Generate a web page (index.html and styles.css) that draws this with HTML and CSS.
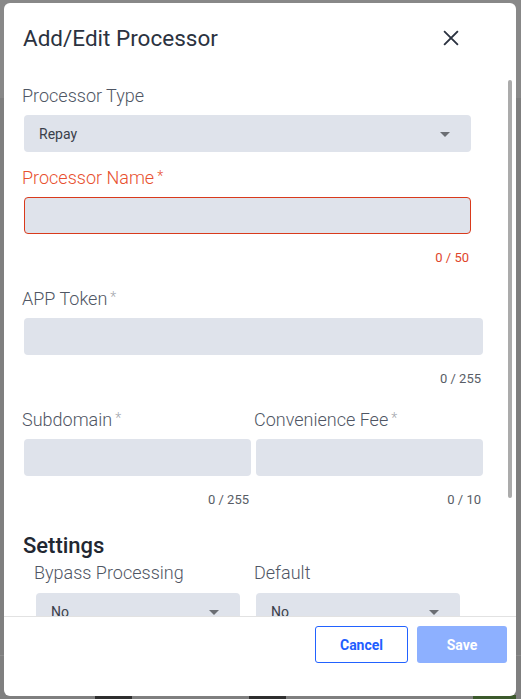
FILE: index.html
```html
<!DOCTYPE html>
<html lang="en">
<head>
<meta charset="utf-8">
<title>Add/Edit Processor</title>
<link rel="stylesheet" href="styles.css">
</head>
<body>
<div class="backdrop">
  <div class="bd-top"></div>
  <div class="bd-line"></div>
  <div class="bd-block bd-b1"></div>
  <div class="bd-block bd-b2"></div>
  <div class="bd-block bd-b3"></div>
</div>
<div class="modal">
  <div class="header">
    <h1 class="title">Add/Edit Processor</h1>
    <button class="close" aria-label="Close">
      <svg width="24" height="24" viewBox="0 0 24 24"><path d="M5.8 5.8 L18.2 18.2 M18.2 5.8 L5.8 18.2" stroke="#2b3240" stroke-width="1.9" stroke-linecap="square" fill="none"/></svg>
    </button>
  </div>
  <div class="body">
    <div class="field field-type">
      <label class="label">Processor Type</label>
      <div class="select narrow"><span>Repay</span><i class="caret"></i></div>
    </div>
    <div class="field">
      <label class="label error">Processor Name<span class="star">*</span></label>
      <div class="input narrow invalid"></div>
      <div class="counter error-text narrow">0 / 50</div>
    </div>
    <div class="field">
      <label class="label">APP Token<span class="star">*</span></label>
      <div class="input"></div>
      <div class="counter">0 / 255</div>
    </div>
    <div class="row">
      <div class="field">
        <label class="label">Subdomain<span class="star">*</span></label>
        <div class="input"></div>
        <div class="counter">0 / 255</div>
      </div>
      <div class="field">
        <label class="label">Convenience Fee<span class="star">*</span></label>
        <div class="input"></div>
        <div class="counter">0 / 10</div>
      </div>
    </div>
    <h2 class="section">Settings</h2>
    <div class="settings">
      <div class="sfield">
        <label class="label">Bypass Processing</label>
        <div class="select"><span>No</span><i class="caret"></i></div>
      </div>
      <div class="sfield">
        <label class="label">Default</label>
        <div class="select"><span>No</span><i class="caret"></i></div>
      </div>
    </div>
  </div>
  <div class="scroll-thumb"></div>
  <div class="footer">
    <button class="btn btn-cancel">Cancel</button>
    <button class="btn btn-save">Save</button>
  </div>
</div>
</body>
</html>
```
FILE: styles.css
```css
* { box-sizing: border-box; }
html, body { margin: 0; padding: 0; }
body {
  width: 521px;
  height: 699px;
  overflow: hidden;
  background: #7f7f7f;
  font-family: Roboto, "Liberation Sans", sans-serif;
  position: relative;
}
.backdrop { position: absolute; inset: 0; }
.bd-top { position: absolute; left: 0; top: 0; width: 521px; height: 98px; background: #888888; }
.bd-line { position: absolute; left: 0; top: 655px; width: 521px; height: 1px; background: #8c8c8c; }
.bd-block { position: absolute; top: 695px; height: 4px; }
.bd-b1 { left: 95px; width: 37px; background: #2f2f2f; }
.bd-b2 { left: 249px; width: 37px; background: #2f2f2f; }
.bd-b3 { left: 473px; width: 43px; background: #3c5a2c; }

.modal {
  position: relative;
  margin: 3px 0 0 4px;
  width: 512px;
  height: 693px;
  background: #fff;
  border-radius: 6px;
  display: flex;
  flex-direction: column;
  overflow: hidden;
}
.header {
  display: flex;
  align-items: center;
  justify-content: space-between;
  padding: 21px 53px 0 19px;
}
.title {
  margin: 0;
  font-size: 22.5px;
  line-height: 28px;
  font-weight: 400;
  color: #2b3240;
}
.close {
  border: 0;
  background: none;
  padding: 0;
  width: 24px;
  height: 24px;
  display: block;
}
.close svg { display: block; }

.body {
  flex: 1;
  overflow: hidden;
  padding: 33px 33px 0 20px;
}
.label {
  display: block;
  margin-left: -2px;
  font-size: 18px;
  line-height: 22px;
  font-weight: 300;
  color: #4f5664;
}
.label.error { color: #e8502f; }
.star {
  font-size: 14px;
  color: #a3a6ab;
  margin-left: 3px;
  vertical-align: 3px;
  line-height: 0;
}
.label.error .star { color: #e8502f; }

.field { margin-bottom: 22px; }
.field-type { margin-bottom: 15px; }

.input, .select {
  margin-top: 8px;
  height: 37px;
  background: #dfe3eb;
  border-radius: 4px;
}
.narrow { width: 447px; }
.input.invalid { border: 1px solid #d93a1c; }

.select {
  display: flex;
  align-items: center;
  justify-content: space-between;
  padding: 0 21px 0 15px;
  font-size: 14px;
  color: #3a3f4a;
}
.caret {
  width: 0;
  height: 0;
  border-left: 5px solid transparent;
  border-right: 5px solid transparent;
  border-top: 5px solid #6b6e73;
  margin-top: 1px;
}

.counter {
  margin-top: 16px;
  font-size: 13px;
  line-height: 16px;
  font-weight: 400;
  color: #585d66;
  text-align: right;
  padding-right: 2px;
}
.counter.error-text { color: #e0452b; }

.row {
  display: grid;
  grid-template-columns: 1fr 1fr;
  gap: 5px;
}
.row .field { margin-bottom: 0; }

.section {
  margin: 25px 0 0 -1px;
  font-size: 22px;
  line-height: 26px;
  font-weight: 500;
  color: #222731;
}
.settings {
  display: grid;
  grid-template-columns: 204px 204px;
  gap: 16px;
  padding-left: 12px;
  margin-top: 3px;
}
.sfield .select { margin-top: 9px; }

.scroll-thumb {
  position: absolute;
  left: 504px;
  top: 77px;
  width: 4px;
  height: 418px;
  border-radius: 2px;
  background: #ababab;
}

.footer {
  border-top: 1px solid #e2e2e2;
  padding: 9px 9px 33px 0;
  display: flex;
  justify-content: flex-end;
  gap: 9px;
}
.btn {
  height: 37px;
  border-radius: 3px;
  font-family: Roboto, "Liberation Sans", sans-serif;
  font-size: 14px;
  font-weight: 700;
  padding: 0;
}
.btn-cancel {
  width: 93px;
  background: #fff;
  border: 1px solid #2262ff;
  color: #1f5eff;
}
.btn-save {
  width: 90px;
  background: #8db0ff;
  border: 0;
  color: #fff;
}
```
